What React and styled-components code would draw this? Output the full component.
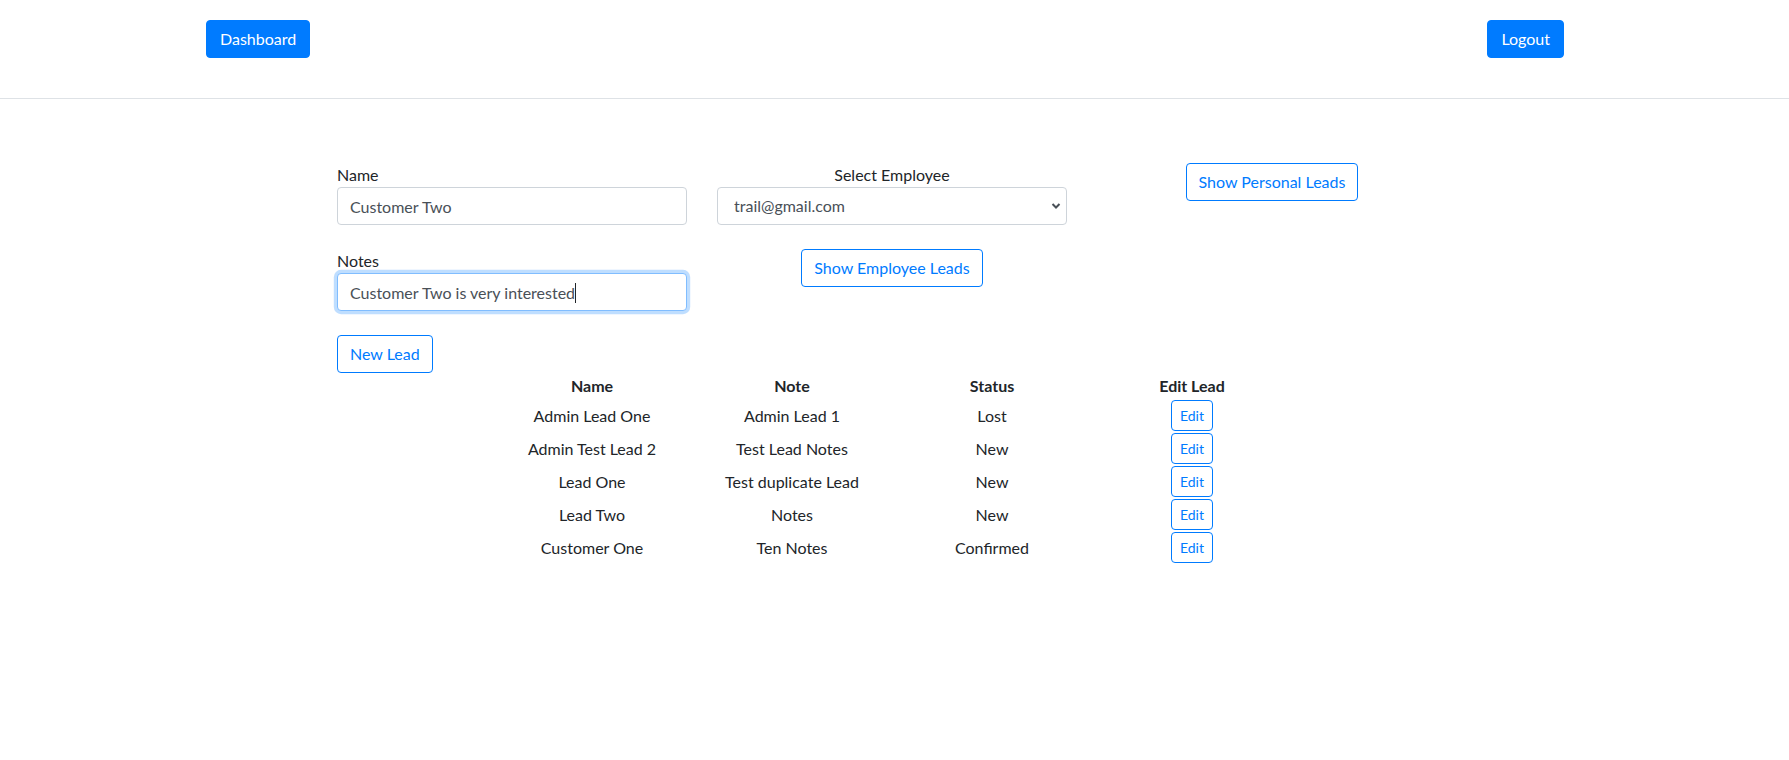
import React from "react";
import styled, { createGlobalStyle, css } from "styled-components";

const GlobalStyle = createGlobalStyle`
  * {
    box-sizing: border-box;
  }
  body {
    margin: 0;
    background: #fff;
    color: #212529;
    font-family: "Segoe UI", Lato, "Liberation Sans", sans-serif;
    font-size: 16px;
    line-height: 1.5;
  }
`;

const Nav = styled.nav`
  display: flex;
  justify-content: space-between;
  align-items: flex-start;
  padding: 20px 225px 40px 206px;
  border-bottom: 1px solid #dee2e6;
`;

const SolidButton = styled.button`
  font-family: inherit;
  font-size: 16px;
  line-height: 24px;
  padding: 6px 13px;
  color: #fff;
  background: #007bff;
  border: 1px solid #007bff;
  border-radius: 4px;
  cursor: pointer;
`;

const OutlineButton = styled.button`
  font-family: inherit;
  color: #007bff;
  background: transparent;
  border: 1px solid #007bff;
  border-radius: 4px;
  cursor: pointer;
  font-size: ${(p) => (p.$small ? "14px" : "16px")};
  line-height: ${(p) => (p.$small ? "21px" : "24px")};
  padding: ${(p) => (p.$small ? "4px 8px" : "6px 12px")};
`;

const Main = styled.main`
  width: 1110px;
  margin: 64px 0 0 337px;
`;

const FormRow = styled.div`
  display: grid;
  grid-template-columns: repeat(3, 350px);
  column-gap: 30px;
  align-items: start;
`;

const Column = styled.div`
  display: flex;
  flex-direction: column;
  align-items: ${(p) => (p.$center ? "center" : "stretch")};
`;

const Field = styled.div`
  display: flex;
  flex-direction: column;
  width: 100%;
  margin-bottom: 24px;
`;

const Label = styled.label`
  display: block;
  line-height: 24px;
  text-align: ${(p) => (p.$center ? "center" : "left")};
`;

const inputBase = css`
  width: 100%;
  height: 38px;
  padding: 6px 12px;
  font-family: inherit;
  font-size: 16px;
  line-height: 24px;
  color: #495057;
  background: #fff;
  border: 1px solid #ced4da;
  border-radius: 4px;
  outline: none;
`;

const InputWrap = styled.div`
  position: relative;
  width: 100%;
`;

const Input = styled.input`
  ${inputBase}
  ${(p) =>
    p.$focused &&
    css`
      border-color: #80bdff;
      box-shadow: 0 0 0 3.2px rgba(0, 123, 255, 0.25);
    `}
`;

const Caret = styled.span`
  position: absolute;
  left: 238px;
  top: 10px;
  width: 1px;
  height: 20px;
  background: #212529;
`;

const Select = styled.select`
  ${inputBase}
  appearance: none;
  padding-left: 16px;
`;

const Chevron = styled.svg`
  position: absolute;
  right: 6px;
  top: 15px;
  width: 10px;
  height: 8px;
  pointer-events: none;
`;

const Table = styled.table`
  width: 800px;
  margin: 0 auto;
  border-collapse: collapse;
  table-layout: fixed;
  text-align: center;
`;

const Th = styled.th`
  font-weight: 700;
  padding: 1px;
`;

const Td = styled.td`
  padding: 1px;
  height: 33px;
`;

const leads = [
  { name: "Admin Lead One", note: "Admin Lead 1", status: "Lost" },
  { name: "Admin Test Lead 2", note: "Test Lead Notes", status: "New" },
  { name: "Lead One", note: "Test duplicate Lead", status: "New" },
  { name: "Lead Two", note: "Notes", status: "New" },
  { name: "Customer One", note: "Ten Notes", status: "Confirmed" },
];

export default function App() {
  return (
    <>
      <GlobalStyle />
      <Nav>
        <SolidButton>Dashboard</SolidButton>
        <SolidButton>Logout</SolidButton>
      </Nav>
      <Main>
        <FormRow>
          <Column>
            <Field>
              <Label>Name</Label>
              <Input defaultValue="Customer Two" />
            </Field>
            <Field>
              <Label>Notes</Label>
              <InputWrap>
                <Input $focused defaultValue="Customer Two is very interested" />
                <Caret />
              </InputWrap>
            </Field>
            <div>
              <OutlineButton>New Lead</OutlineButton>
            </div>
          </Column>
          <Column $center>
            <Field>
              <Label $center>Select Employee</Label>
              <InputWrap>
                <Select defaultValue="trail@gmail.com">
                  <option>trail@gmail.com</option>
                </Select>
                <Chevron viewBox="0 0 10 8">
                  <path d="M1.5 2 L5 5.5 L8.5 2" fill="none" stroke="#495057" strokeWidth="2" />
                </Chevron>
              </InputWrap>
            </Field>
            <OutlineButton>Show Employee Leads</OutlineButton>
          </Column>
          <Column $center>
            <OutlineButton>Show Personal Leads</OutlineButton>
          </Column>
        </FormRow>
        <Table>
          <thead>
            <tr>
              <Th>Name</Th>
              <Th>Note</Th>
              <Th>Status</Th>
              <Th>Edit Lead</Th>
            </tr>
          </thead>
          <tbody>
            {leads.map((l) => (
              <tr key={l.name}>
                <Td>{l.name}</Td>
                <Td>{l.note}</Td>
                <Td>{l.status}</Td>
                <Td>
                  <OutlineButton $small>Edit</OutlineButton>
                </Td>
              </tr>
            ))}
          </tbody>
        </Table>
      </Main>
    </>
  );
}
